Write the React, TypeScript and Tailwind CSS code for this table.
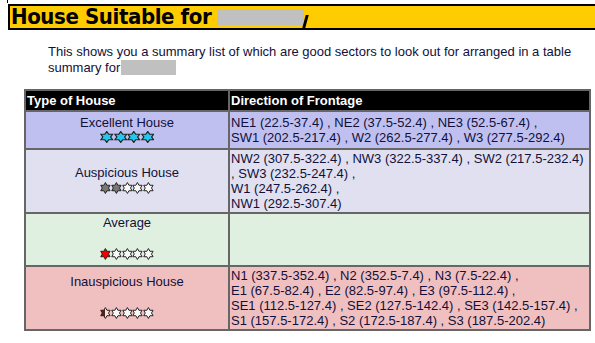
import React from "react";

const PTS =
  "0,-6 1.73,-3 5.2,-3 3.46,0 5.2,3 1.73,3 0,6 -1.73,3 -5.2,3 -3.46,0 -5.2,-3 -1.73,-3";

function Star({ fill, w, id }: { fill: string; w: number; id?: string }) {
  return (
    <svg width={w} height={12} viewBox="-6 -6.6 12 13.2" preserveAspectRatio="none" className="block">
      {id && (
        <defs>
          <linearGradient id={id} x1="0" x2="1" y1="0" y2="0">
            <stop offset="0" stopColor="#5a2014" />
            <stop offset="0.5" stopColor="#5a2014" />
            <stop offset="0.5" stopColor="#f4e4e4" />
            <stop offset="1" stopColor="#f4e4e4" />
          </linearGradient>
        </defs>
      )}
      <polygon
        points={PTS}
        fill={id ? `url(#${id})` : fill}
        stroke="#222"
        strokeWidth="1.1"
        strokeLinejoin="miter"
      />
    </svg>
  );
}

function Stars({ fills, w, halfId }: { fills: string[]; w: number; halfId?: string }) {
  return (
    <div className="flex justify-center">
      {fills.map((f, i) => (
        <Star key={i} fill={f} w={w} id={i === 0 && halfId ? halfId : undefined} />
      ))}
    </div>
  );
}

const W = "#f8f8f8";

export default function App() {
  return (
    <div
      className="relative w-[595px] h-[343px] overflow-hidden bg-white text-[#10103a]"
      style={{ fontFamily: '"Liberation Sans", Arial, sans-serif' }}
    >
      <div className="absolute left-[7px] top-0 w-px h-[3px] bg-black" />
      <div className="pt-[4px] pl-[8px]">
        <div className="h-[26px] bg-[#ffcc00] border-l-2 border-t-2 border-b-2 border-black flex items-center pl-[1px]">
          <span
            className="text-[22px] font-bold text-black leading-none tracking-[-0.4px]"
            style={{ fontFamily: '"DejaVu Sans Condensed", Tahoma, "DejaVu Sans", sans-serif', fontStretch: "condensed" }}
          >
            House Suitable for
          </span>
          <span className="relative ml-[6px] inline-block w-[87px] h-[16px] bg-[#c0c0c0]">
            <span className="absolute right-[-3px] top-[6px] w-[3px] h-[13px] bg-black skew-x-[-15deg]" />
          </span>
        </div>
      </div>

      <div className="pl-[48px] pt-[14px] text-[13px] leading-[16px]">
        This shows you a summary list of which are good sectors to look out for arranged in a table
        <br />
        summary for
        <span className="inline-block align-[-3px] ml-[1px] w-[55px] h-[15px] bg-[#c0c0c0]" />
      </div>

      <div className="pl-[24px] pt-[13px]">
        <table className="w-[567px] border-collapse border-2 border-[#666] text-[13px] leading-[15px]">
          <thead>
            <tr className="bg-black text-white">
              <th className="w-[204px] border-2 border-[#666] text-left font-bold px-[1px] py-[2px]">
                Type of House
              </th>
              <th className="border-2 border-[#666] text-left font-bold px-[1px] py-[2px]">
                Direction of Frontage
              </th>
            </tr>
          </thead>
          <tbody>
            <tr className="bg-[#c0c0f0]">
              <td className="border-2 border-[#666] text-center align-middle px-[1px] py-[1px]">
                <div className="pt-[2px]">Excellent House</div>
                <div className="h-[17px] pt-[1px]">
                  <Stars fills={["#22c8ee", "#22c8ee", "#22c8ee", "#22c8ee"]} w={13.5} />
                </div>
              </td>
              <td className="border-2 border-[#666] align-middle px-[1px] py-[3px]">
                NE1 (22.5-37.4) , NE2 (37.5-52.4) , NE3 (52.5-67.4) ,
                <br />
                SW1 (202.5-217.4) , W2 (262.5-277.4) , W3 (277.5-292.4)
              </td>
            </tr>
            <tr className="bg-[#e0e0f0]">
              <td className="border-2 border-[#666] text-center align-middle px-[1px] py-[1px]">
                <div>Auspicious House</div>
                <div className="h-[17px] pt-[2px]">
                  <Stars fills={["#777", "#777", W, W, W]} w={10.8} />
                </div>
              </td>
              <td className="border-2 border-[#666] align-middle px-[1px] py-[1px]">
                NW2 (307.5-322.4) , NW3 (322.5-337.4) , SW2 (217.5-232.4)
                <br />, SW3 (232.5-247.4) ,
                <br />
                W1 (247.5-262.4) ,
                <br />
                NW1 (292.5-307.4)
              </td>
            </tr>
            <tr className="bg-[#e0f0e0]">
              <td className="h-[53px] border-2 border-[#666] text-center align-middle px-[1px] py-[1px]">
                <div>Average</div>
                <div className="h-[15px]" />
                <div className="h-[19px] pt-[3px]">
                  <Stars fills={["#ee0000", W, W, W, W]} w={10.8} />
                </div>
              </td>
              <td className="border-2 border-[#666]" />
            </tr>
            <tr className="bg-[#f0c0c0]">
              <td className="border-2 border-[#666] text-center align-middle px-[1px] py-[1px]">
                <div>Inauspicious House</div>
                <div className="h-[15px]" />
                <div className="h-[19px] pt-[3px]">
                  <Stars fills={["#5a2014", W, W, W, W]} w={10.8} halfId="halfstar" />
                </div>
              </td>
              <td className="border-2 border-[#666] align-middle px-[1px] py-[1px]">
                N1 (337.5-352.4) , N2 (352.5-7.4) , N3 (7.5-22.4) ,
                <br />
                E1 (67.5-82.4) , E2 (82.5-97.4) , E3 (97.5-112.4) ,
                <br />
                SE1 (112.5-127.4) , SE2 (127.5-142.4) , SE3 (142.5-157.4) ,
                <br />
                S1 (157.5-172.4) , S2 (172.5-187.4) , S3 (187.5-202.4)
              </td>
            </tr>
          </tbody>
        </table>
      </div>
    </div>
  );
}
